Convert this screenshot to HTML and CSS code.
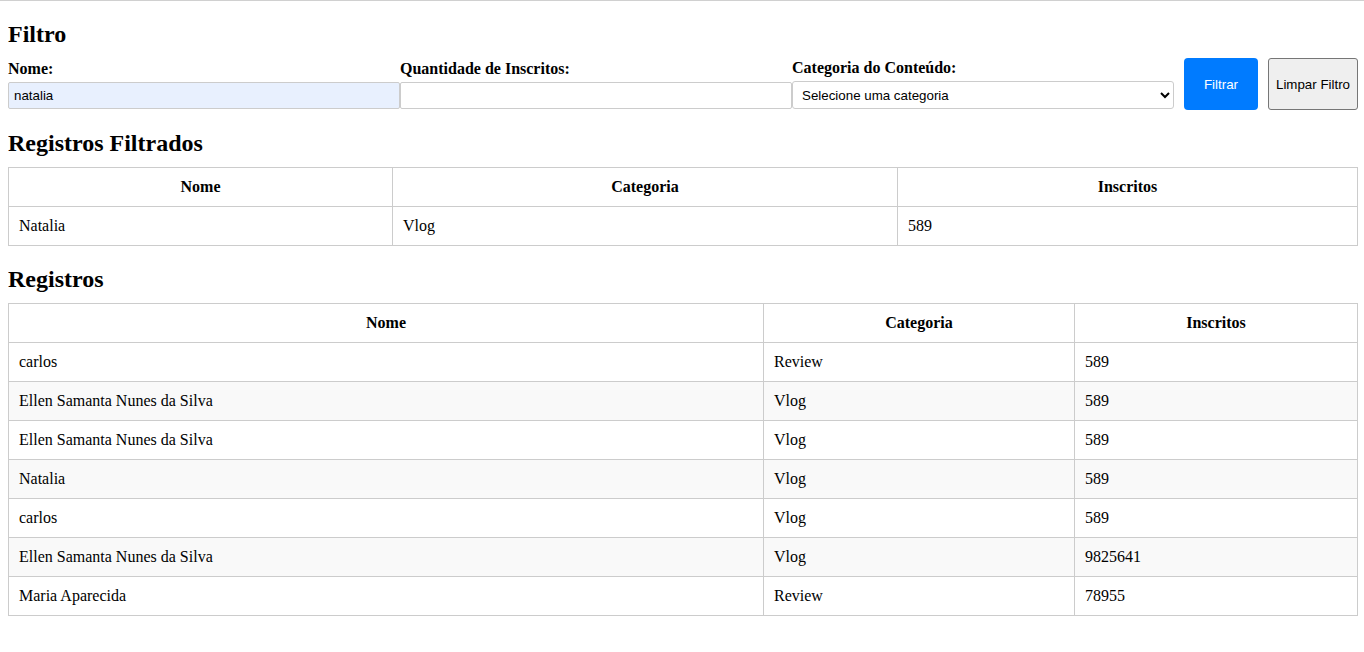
FILE: index.html
```html
<!DOCTYPE html>
<html lang="pt-BR">
<head>
<meta charset="utf-8">
<title>Filtro</title>
<link rel="stylesheet" href="styles.css">
</head>
<body>
<h2 class="title">Filtro</h2>
<form class="filter-row">
  <div class="field field-nome">
    <label class="field-label" for="nome">Nome:</label>
    <input class="text-input autofilled" id="nome" type="text" value="natalia">
  </div>
  <div class="field field-qtd">
    <label class="field-label" for="qtd">Quantidade de Inscritos:</label>
    <input class="text-input" id="qtd" type="text" value="">
  </div>
  <div class="field field-cat">
    <label class="field-label" for="cat">Categoria do Conteúdo:</label>
    <select class="select-input" id="cat">
      <option>Selecione uma categoria</option>
      <option>Vlog</option>
      <option>Review</option>
    </select>
  </div>
  <button type="button" class="btn btn-primary">Filtrar</button>
  <button type="button" class="btn btn-secondary">Limpar Filtro</button>
</form>

<h2 class="title">Registros Filtrados</h2>
<table class="data-table">
  <colgroup>
    <col class="f-col1"><col class="f-col2"><col class="f-col3">
  </colgroup>
  <thead>
    <tr><th>Nome</th><th>Categoria</th><th>Inscritos</th></tr>
  </thead>
  <tbody>
    <tr><td>Natalia</td><td>Vlog</td><td>589</td></tr>
  </tbody>
</table>

<h2 class="title">Registros</h2>
<table class="data-table striped">
  <colgroup>
    <col class="r-col1"><col class="r-col2"><col class="r-col3">
  </colgroup>
  <thead>
    <tr><th>Nome</th><th>Categoria</th><th>Inscritos</th></tr>
  </thead>
  <tbody>
    <tr><td>carlos</td><td>Review</td><td>589</td></tr>
    <tr><td>Ellen Samanta Nunes da Silva</td><td>Vlog</td><td>589</td></tr>
    <tr><td>Ellen Samanta Nunes da Silva</td><td>Vlog</td><td>589</td></tr>
    <tr><td>Natalia</td><td>Vlog</td><td>589</td></tr>
    <tr><td>carlos</td><td>Vlog</td><td>589</td></tr>
    <tr><td>Ellen Samanta Nunes da Silva</td><td>Vlog</td><td>9825641</td></tr>
    <tr><td>Maria Aparecida</td><td>Review</td><td>78955</td></tr>
  </tbody>
</table>
</body>
</html>
```
FILE: styles.css
```css
html {
  border-top: 1px solid #d0d0d0;
}

body {
  margin: 0 6px 8px 8px;
  font-family: "Liberation Serif", "Times New Roman", serif;
  font-size: 16px;
  color: #000;
  background: #fff;
}

.title {
  font-size: 24px;
  font-weight: bold;
  margin: 20px 0 10px;
}

.filter-row {
  display: flex;
  align-items: center;
  margin: 0;
}

.field {
  display: flex;
  flex-direction: column;
  flex-shrink: 0;
}

.field-nome,
.field-qtd {
  width: 392px;
}

.field-cat {
  width: 382px;
}

.field-label {
  display: block;
  font-weight: bold;
  line-height: 18px;
  margin-bottom: 4px;
}

.text-input {
  box-sizing: border-box;
  width: 100%;
  height: 27px;
  margin: 0;
  padding: 4px 5px;
  border: 1px solid #cccccc;
  border-radius: 2px;
  font-family: "Liberation Sans", Arial, sans-serif;
  font-size: 13.33px;
  color: #000;
  background: #fff;
}

.autofilled {
  background: #e8f0fe;
}

.select-input {
  box-sizing: border-box;
  width: 100%;
  height: 28px;
  margin: 0;
  padding: 4px 5px;
  border: 1px solid #cccccc;
  border-radius: 3px;
  font-family: "Liberation Sans", Arial, sans-serif;
  font-size: 13.33px;
  color: #000;
  background: #fff;
}

.btn {
  box-sizing: border-box;
  flex-shrink: 0;
  height: 52px;
  margin: 0 0 0 10px;
  padding: 0 2px;
  white-space: nowrap;
  font-family: "Liberation Sans", Arial, sans-serif;
  font-size: 13.33px;
  cursor: pointer;
}

.btn-primary {
  width: 74px;
  background: #007bff;
  color: #fff;
  border: none;
  border-radius: 4px;
}

.btn-secondary {
  width: 90px;
  background: #efefef;
  color: #000;
  border: 1px solid #767676;
  border-radius: 3px;
}

.data-table {
  width: 1350px;
  border-collapse: collapse;
  table-layout: fixed;
}

.data-table th,
.data-table td {
  border: 1px solid #cccccc;
  padding: 10px;
  line-height: 18px;
  text-align: left;
}

.data-table th {
  text-align: center;
  font-weight: bold;
}

.striped tbody tr:nth-child(even) {
  background: #f9f9f9;
}

.f-col1 { width: 384px; }
.f-col2 { width: 505px; }

.r-col1 { width: 755px; }
.r-col2 { width: 311px; }
```
